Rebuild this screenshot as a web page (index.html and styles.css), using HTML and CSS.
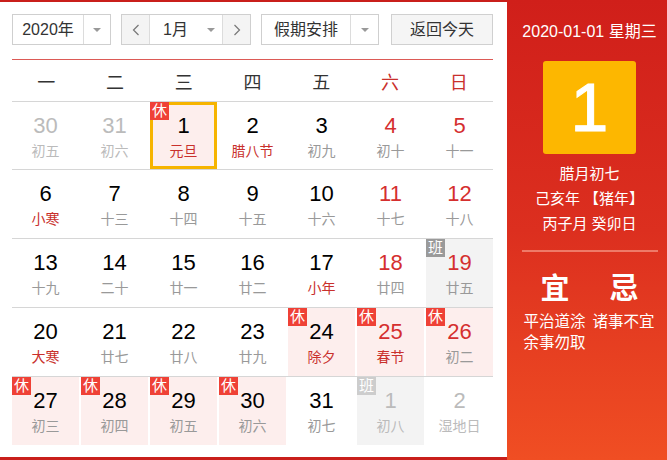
FILE: index.html
```html
<!DOCTYPE html>
<html lang="zh-CN">
<head>
<meta charset="utf-8">
<title>万年历</title>
<link rel="stylesheet" href="styles.css">
</head>
<body>
<div class="cal">
  <section class="main">
    <div class="toolbar">
      <div class="select year">
        <span class="select-text">2020年</span>
        <span class="select-arrow"><i class="tri"></i></span>
      </div>
      <div class="select month">
        <span class="nav-btn"><svg width="8" height="12" viewBox="0 0 8 12"><path d="M6.5 1 L1.5 6 L6.5 11" fill="none" stroke="#777" stroke-width="1.2"/></svg></span>
        <span class="month-mid"><span class="select-text">1月</span><i class="tri"></i></span>
        <span class="nav-btn"><svg width="8" height="12" viewBox="0 0 8 12"><path d="M1.5 1 L6.5 6 L1.5 11" fill="none" stroke="#777" stroke-width="1.2"/></svg></span>
      </div>
      <div class="select holiday">
        <span class="select-text">假期安排</span>
        <span class="select-arrow"><i class="tri"></i></span>
      </div>
      <button class="today-btn">返回今天</button>
    </div>

    <div class="weekdays">
      <span>一</span><span>二</span><span>三</span><span>四</span><span>五</span><span class="we">六</span><span class="we">日</span>
    </div>

    <div class="row">
      <div class="day other"><b>30</b><em>初五</em></div>
      <div class="day other"><b>31</b><em>初六</em></div>
      <div class="day rest selected"><i class="tag">休</i><b>1</b><em class="fest">元旦</em></div>
      <div class="day"><b>2</b><em class="fest">腊八节</em></div>
      <div class="day"><b>3</b><em>初九</em></div>
      <div class="day we"><b>4</b><em>初十</em></div>
      <div class="day we"><b>5</b><em>十一</em></div>
    </div>
    <div class="row">
      <div class="day"><b>6</b><em class="fest">小寒</em></div>
      <div class="day"><b>7</b><em>十三</em></div>
      <div class="day"><b>8</b><em>十四</em></div>
      <div class="day"><b>9</b><em>十五</em></div>
      <div class="day"><b>10</b><em>十六</em></div>
      <div class="day we"><b>11</b><em>十七</em></div>
      <div class="day we"><b>12</b><em>十八</em></div>
    </div>
    <div class="row">
      <div class="day"><b>13</b><em>十九</em></div>
      <div class="day"><b>14</b><em>二十</em></div>
      <div class="day"><b>15</b><em>廿一</em></div>
      <div class="day"><b>16</b><em>廿二</em></div>
      <div class="day"><b>17</b><em class="fest">小年</em></div>
      <div class="day we"><b>18</b><em>廿四</em></div>
      <div class="day we work"><i class="tag gray">班</i><b>19</b><em>廿五</em></div>
    </div>
    <div class="row">
      <div class="day"><b>20</b><em class="fest">大寒</em></div>
      <div class="day"><b>21</b><em>廿七</em></div>
      <div class="day"><b>22</b><em>廿八</em></div>
      <div class="day"><b>23</b><em>廿九</em></div>
      <div class="day rest"><i class="tag">休</i><b>24</b><em class="fest">除夕</em></div>
      <div class="day we rest"><i class="tag">休</i><b>25</b><em class="fest">春节</em></div>
      <div class="day we rest"><i class="tag">休</i><b>26</b><em>初二</em></div>
    </div>
    <div class="row">
      <div class="day rest"><i class="tag">休</i><b>27</b><em>初三</em></div>
      <div class="day rest"><i class="tag">休</i><b>28</b><em>初四</em></div>
      <div class="day rest"><i class="tag">休</i><b>29</b><em>初五</em></div>
      <div class="day rest"><i class="tag">休</i><b>30</b><em>初六</em></div>
      <div class="day"><b>31</b><em>初七</em></div>
      <div class="day other work"><i class="tag faded">班</i><b>1</b><em>初八</em></div>
      <div class="day other"><b>2</b><em>湿地日</em></div>
    </div>
  </section>

  <aside class="side">
    <div class="side-date">2020-01-01 星期三</div>
    <div class="big-day">1</div>
    <div class="lunar">
      <p>腊月初七</p>
      <p>己亥年 【猪年】</p>
      <p>丙子月 癸卯日</p>
    </div>
    <div class="divider"></div>
    <div class="yiji">
      <div class="yj-col">
        <div class="yj-head">宜</div>
        <div class="yj-text">平治道涂 余事勿取</div>
      </div>
      <div class="yj-col">
        <div class="yj-head">忌</div>
        <div class="yj-text">诸事不宜</div>
      </div>
    </div>
  </aside>
</div>
</body>
</html>
```

FILE: styles.css
```css
* { box-sizing: border-box; }

html, body {
  margin: 0;
  padding: 0;
  background: #fff;
  overflow: hidden;
}

body {
  font-family: "Liberation Sans", "Noto Sans CJK SC", sans-serif;
  color: #333;
}

.cal {
  display: flex;
  width: 672px;
  height: 460px;
}

.main {
  width: 507px;
  height: 460px;
  padding: 12px 14px 0 12px;
  border-top: 2px solid #c91f1b;
  border-bottom: 3px solid #c91f1b;
  background: #fff;
}

/* toolbar */
.toolbar {
  display: flex;
  gap: 10px;
  height: 31px;
}

.select {
  display: flex;
  height: 31px;
  border: 1px solid #cfcfcf;
  background: #fff;
  font-size: 16px;
  color: #333;
}

.select-text {
  line-height: 29px;
}

.year { width: 99px; }
.year .select-text { width: 70px; text-align: center; }
.holiday { width: 118px; }
.holiday .select-text { width: 88px; text-align: center; }

.select-arrow {
  flex: 1;
  border-left: 1px solid #dcdcdc;
  display: flex;
  align-items: center;
  justify-content: center;
}

.tri {
  display: block;
  width: 0;
  height: 0;
  border-left: 4px solid transparent;
  border-right: 4px solid transparent;
  border-top: 4px solid #999;
}

.month { width: 130px; }

.nav-btn {
  width: 28px;
  background: #f4f4f4;
  display: flex;
  align-items: center;
  justify-content: center;
}
.nav-btn:first-child { border-right: 1px solid #dcdcdc; }
.nav-btn:last-child { border-left: 1px solid #dcdcdc; }

.month-mid {
  flex: 1;
  display: flex;
  align-items: center;
  padding-left: 13px;
  gap: 19px;
}

.today-btn {
  margin-left: 2px;
  width: 102px;
  height: 31px;
  border: 1px solid #d0d0d0;
  background: #f5f5f5;
  font-family: inherit;
  font-size: 16px;
  color: #333;
  padding: 0;
  line-height: 29px;
}

/* weekdays */
.weekdays {
  margin-top: 14px;
  border-top: 1px solid #dc5a56;
  height: 42px;
  display: grid;
  grid-template-columns: repeat(7, 1fr);
  align-items: center;
  text-align: center;
  font-size: 18px;
  color: #333;
}
.weekdays .we { color: #c9302c; }

/* day rows */
.row {
  display: grid;
  grid-template-columns: repeat(7, 1fr);
  column-gap: 2px;
  height: 69px;
  border-top: 1px solid #d6d6d6;
}
.row:nth-of-type(3) { height: 68px; }

.day {
  position: relative;
  display: flex;
  flex-direction: column;
  align-items: center;
  padding-top: 12px;
}

.day b {
  font-weight: normal;
  font-size: 22px;
  line-height: 24px;
  color: #000;
}

.day em {
  font-style: normal;
  font-size: 14px;
  line-height: 18px;
  margin-top: 4px;
  color: #999;
}

.day.we b { color: #d52f2f; }
.day em.fest { color: #c9302c; }

.day.other b,
.day.other em { color: #bbb; }

.day.rest { background: #fdeeed; }
.day.work { background: #f3f3f3; }

.day.selected {
  border: 3px solid #f6b400;
  padding-top: 9px;
}

.tag {
  position: absolute;
  left: 0;
  top: 0;
  width: 19px;
  height: 18px;
  background: #ef4136;
  color: #fff;
  font-style: normal;
  font-size: 15px;
  line-height: 18px;
  text-align: center;
}
.day.selected .tag { left: -3px; top: -3px; }
.tag.gray { background: #9a9a9a; }
.tag.faded { background: #cdcdcd; }

/* side panel */
.side {
  width: 165px;
  height: 460px;
  background: linear-gradient(to bottom, #d01f1a 0%, #dc2f1f 50%, #f04e23 100%);
  color: #fff;
  display: flex;
  flex-direction: column;
  align-items: center;
  padding: 21px 0 0 0;
}

.side-date {
  font-size: 16px;
  line-height: 22px;
  white-space: nowrap;
}

.big-day {
  margin-top: 18px;
  width: 93px;
  height: 93px;
  border-radius: 3px;
  background: #fdb700;
  font-size: 68px;
  line-height: 93px;
  text-align: center;
  color: #fff;
  -webkit-text-stroke: 1px #fff;
}

.lunar {
  margin-top: 7px;
  text-align: center;
  font-size: 15px;
}
.lunar p {
  margin: 0;
  line-height: 25px;
  white-space: nowrap;
}

.divider {
  margin-top: 14px;
  width: 136px;
  height: 2px;
  background: #ee7a68;
}

.yiji {
  margin-top: 20px;
  width: 136px;
  display: grid;
  grid-template-columns: 1fr 1fr;
  column-gap: 2px;
}

.yj-head {
  text-align: center;
  font-size: 29px;
  line-height: 34px;
  font-weight: bold;
}

.yj-text {
  margin-top: 5px;
  font-size: 15.5px;
  line-height: 21px;
  padding-left: 2px;
}
```
